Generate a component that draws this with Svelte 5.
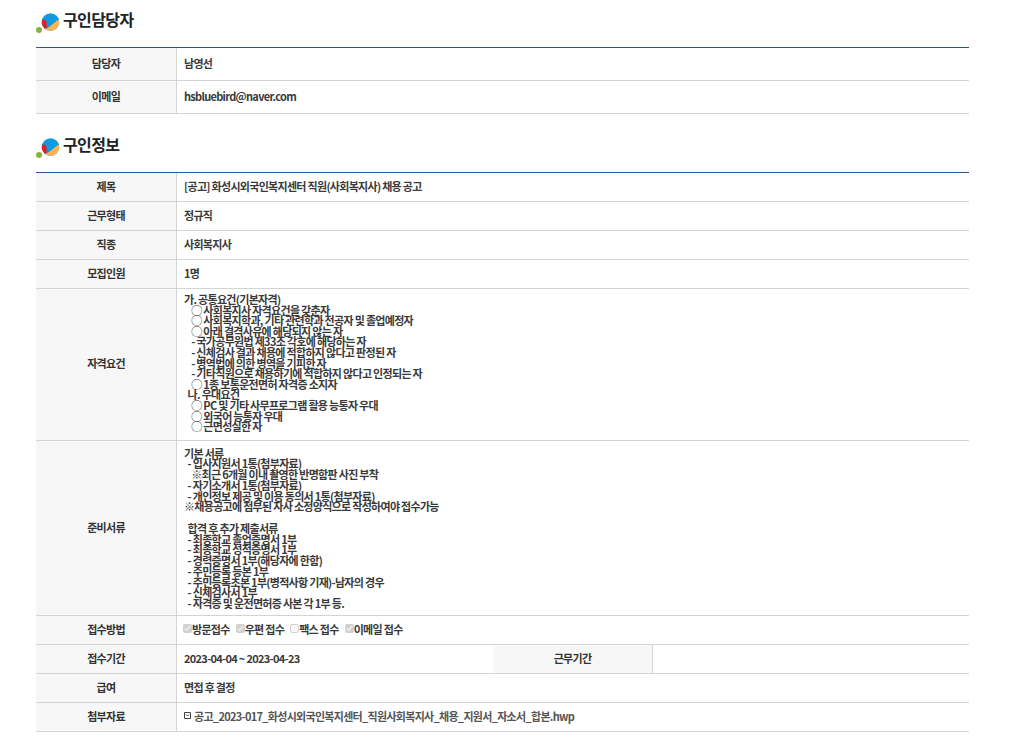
<script>
  const contact = [
    { label: '담당자', value: '남영선' },
    { label: '이메일', value: 'hsbluebird@naver.com' }
  ];
  const info = [
    { label: '제목', value: '[공고] 화성시외국인복지센터 직원(사회복지사) 채용 공고' },
    { label: '근무형태', value: '정규직' },
    { label: '직종', value: '사회복지사' },
    { label: '모집인원', value: '1명' }
  ];
  const qualification = `가. 공통요건(기본자격)
    ◯ 사회복지사 자격요건을 갖춘자
    ◯ 사회복지학과, 기타 관련학과 전공자 및 졸업예정자
    ◯ 아래 결격사유에 해당되지 않는 자
    - 국가공무원법 제33조 각호에 해당하는 자
    - 신체검사 결과 채용에 적합하지 않다고 판정된 자
    - 병역법에 의한 병역을 기피한 자
    - 기타직원으로 채용하기에 적합하지 않다고 인정되는 자
    ◯ 1종 보통운전면허 자격증 소지자
  나. 우대요건
    ◯ PC 및 기타 사무프로그램 활용 능통자 우대
    ◯ 외국어 능통자 우대
    ◯ 근면성실한 자`;
  const documents = `기본 서류
  - 입사지원서 1통(첨부자료)
    ※최근 6개월 이내 촬영한 반명함판 사진 부착
  - 자기소개서 1통(첨부자료)
  - 개인정보 제공 및 이용 동의서 1통(첨부자료)
※채용공고에 첨부된 자사 소정양식으로 작성하여야 접수가능

  합격 후 추가 제출서류
  - 최종학교 졸업증명서 1부
  - 최종학교 성적증명서 1부
  - 경력증명서 1부(해당자에 한함)
  - 주민등록 등본 1부
  - 주민등록초본 1부(병적사항 기재)-남자의 경우
  - 신체검사서 1부
  - 자격증 및 운전면허증 사본 각 1부 등.`;
  const methods = [
    { label: '방문접수', checked: true },
    { label: '우편 접수', checked: true },
    { label: '팩스 접수', checked: false },
    { label: '이메일 접수', checked: true }
  ];
</script>

{#snippet heading(title)}
  <h2 class="heading">
    <svg class="logo" width="32" height="24" viewBox="0 0 32 24">
      <circle cx="3" cy="20" r="3" fill="#8ab23a" />
      <circle cx="14.5" cy="12" r="8.7" fill="#0e9ae0" />
      <path d="M9 18.7 C14 17.5 18 12 22.8 9.4 A8.7 8.7 0 0 1 9 18.7 Z" fill="#fdb44e" />
      <path d="M6 10 C8 8.5 10 10 10.4 12 C10.8 14 10.8 16 11 17.5 L9 18.7 A8.7 8.7 0 0 1 6 10 Z" fill="#e01f2d" />
    </svg>
    {title}
  </h2>
{/snippet}

<div class="page">
  {@render heading('구인담당자')}
  <table class="contact">
    <colgroup><col class="c-head" /><col /></colgroup>
    <tbody>
      {#each contact as row}
        <tr><th>{row.label}</th><td>{row.value}</td></tr>
      {/each}
    </tbody>
  </table>

  {@render heading('구인정보')}
  <table>
    <colgroup><col class="c-head" /><col class="c-a" /><col class="c-b" /><col /></colgroup>
    <tbody>
      {#each info as row}
        <tr><th>{row.label}</th><td colspan="3">{row.value}</td></tr>
      {/each}
      <tr>
        <th>자격요건</th>
        <td colspan="3" class="pre qual">{qualification}</td>
      </tr>
      <tr>
        <th>준비서류</th>
        <td colspan="3" class="pre docs">{documents}</td>
      </tr>
      <tr>
        <th>접수방법</th>
        <td colspan="3">
          <div class="methods">
            {#each methods as m}
              <label><input type="checkbox" disabled checked={m.checked} />{m.label}</label>
            {/each}
          </div>
        </td>
      </tr>
      <tr>
        <th>접수기간</th>
        <td>2023-04-04 ~ 2023-04-23</td>
        <th>근무기간</th>
        <td></td>
      </tr>
      <tr><th>급여</th><td colspan="3">면접 후 결정</td></tr>
      <tr>
        <th>첨부자료</th>
        <td colspan="3">
          <span class="file">
            <svg width="7" height="7" viewBox="0 0 7 7"><path d="M.5.5h6v6h-6zM2 2.5l1.5 1.5L5 2.5" fill="none" stroke="#444" /></svg>
            공고_2023-017_화성시외국인복지센터_직원사회복지사_채용_지원서_자소서_합본.hwp
          </span>
        </td>
      </tr>
    </tbody>
  </table>
</div>

<style>
  :global(body) {
    background: #fff;
  }
  .page {
    padding: 0 41px 0 36px;
    font-family: "Noto Sans CJK KR", "Noto Sans", sans-serif;
    font-size: 11px;
    letter-spacing: -0.7px;
    color: #3a3a3a;
  }
  .heading {
    display: flex;
    align-items: center;
    height: 24px;
    margin: 0 0 16px;
    padding-top: 7px;
    font-size: 16px;
    font-weight: 700;
    letter-spacing: -0.6px;
    color: #222;
    line-height: 24px;
  }
  .logo {
    flex: none;
    margin-top: 6px;
    margin-right: -5px;
  }
  table {
    width: 933px;
    table-layout: fixed;
    border-collapse: separate;
    border-spacing: 0;
    border-top: 1px solid #2a5596;
  }
  .contact {
    margin-bottom: 11px;
  }
  .c-head { width: 141px; }
  .c-a { width: 316px; }
  .c-b { width: 160px; }
  th, td {
    border-bottom: 1px solid #d4d4d4;
    padding: 0 7px 2px;
    height: 26px;
    box-sizing: content-box;
    line-height: 12px;
  }
  .contact th, .contact td {
    height: 30px;
  }
  th {
    background: #f7f7f7;
    border-right: 1px solid #d4d4d4;
    font-weight: 700;
    text-align: center;
    color: #333;
  }
  td {
    font-weight: 700;
    text-align: left;
  }
  .pre {
    white-space: pre-wrap;
    height: auto;
  }
  .qual {
    line-height: 10.6px;
    padding-top: 5px;
    padding-bottom: 8px;
  }
  .docs {
    line-height: 10.75px;
    padding-top: 7px;
    padding-bottom: 6px;
  }
  .methods {
    display: flex;
    gap: 6px;
  }
  label {
    display: flex;
    align-items: center;
  }
  input {
    width: 9px;
    height: 9px;
    margin: 0;
  }
  label:first-child input {
    margin-left: -1px;
  }
  .file {
    display: flex;
    align-items: center;
    gap: 3px;
    color: #555;
    white-space: nowrap;
  }
</style>
